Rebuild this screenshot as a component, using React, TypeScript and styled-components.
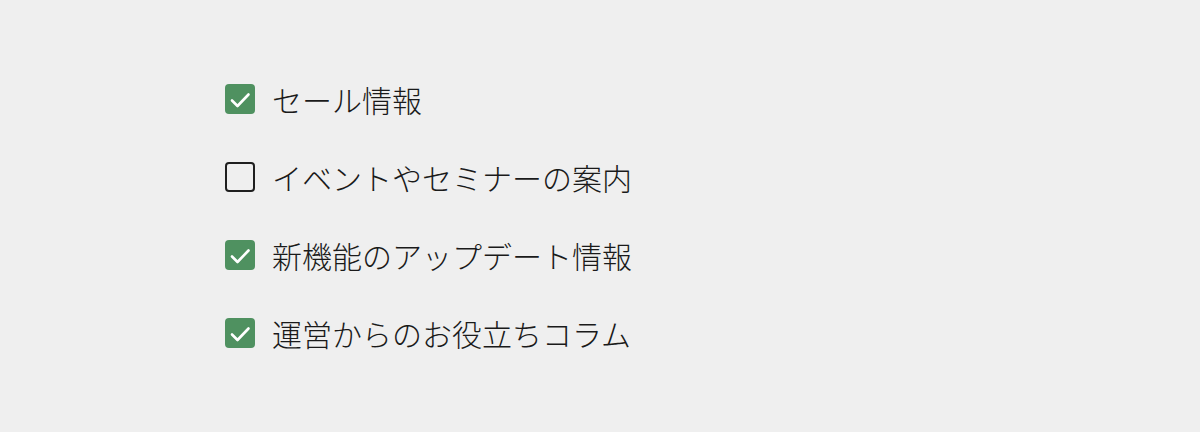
import React, { useState } from "react";
import styled, { createGlobalStyle } from "styled-components";

const GlobalStyle = createGlobalStyle`
  html, body {
    margin: 0;
    padding: 0;
    background: #efefef;
  }
  body {
    font-family: "Noto Sans CJK JP", "Noto Sans", sans-serif;
    color: #1c1c1c;
  }
`;

const Page = styled.div`
  width: 1200px;
  height: 432px;
  box-sizing: border-box;
  padding: 84px 0 0 225px;
  background: #efefef;
`;

const List = styled.ul`
  list-style: none;
  margin: 0;
  padding: 0;
  display: flex;
  flex-direction: column;
  gap: 48px;
`;

const Row = styled.li`
  display: flex;
  align-items: center;
  gap: 17px;
  height: 30px;
  cursor: pointer;
  user-select: none;
`;

const Box = styled.span<{ $checked: boolean }>`
  width: 30px;
  height: 30px;
  box-sizing: border-box;
  border-radius: 4px;
  flex: none;
  display: flex;
  align-items: center;
  justify-content: center;
  background: ${(p) => (p.$checked ? "#4f9160" : "transparent")};
  border: ${(p) => (p.$checked ? "none" : "2px solid #1f1f1f")};
`;

const Label = styled.span`
  font-size: 30px;
  line-height: 30px;
  font-weight: 300;
  color: #1a1a1a;
  white-space: nowrap;
`;

const Check = () => (
  <svg width="30" height="30" viewBox="0 0 30 30" fill="none">
    <path
      d="M7 16.5 L12.5 22 L23.5 10.5"
      stroke="#ffffff"
      strokeWidth="2.6"
      strokeLinecap="round"
      strokeLinejoin="round"
    />
  </svg>
);

const initial = [
  { label: "セール情報", checked: true },
  { label: "イベントやセミナーの案内", checked: false },
  { label: "新機能のアップデート情報", checked: true },
  { label: "運営からのお役立ちコラム", checked: true },
];

export default function App() {
  const [items, setItems] = useState(initial);
  const toggle = (i: number) =>
    setItems((prev) =>
      prev.map((it, j) => (j === i ? { ...it, checked: !it.checked } : it))
    );
  return (
    <>
      <GlobalStyle />
      <Page>
        <List>
          {items.map((it, i) => (
            <Row key={it.label} onClick={() => toggle(i)} role="checkbox" aria-checked={it.checked}>
              <Box $checked={it.checked}>{it.checked && <Check />}</Box>
              <Label>{it.label}</Label>
            </Row>
          ))}
        </List>
      </Page>
    </>
  );
}
